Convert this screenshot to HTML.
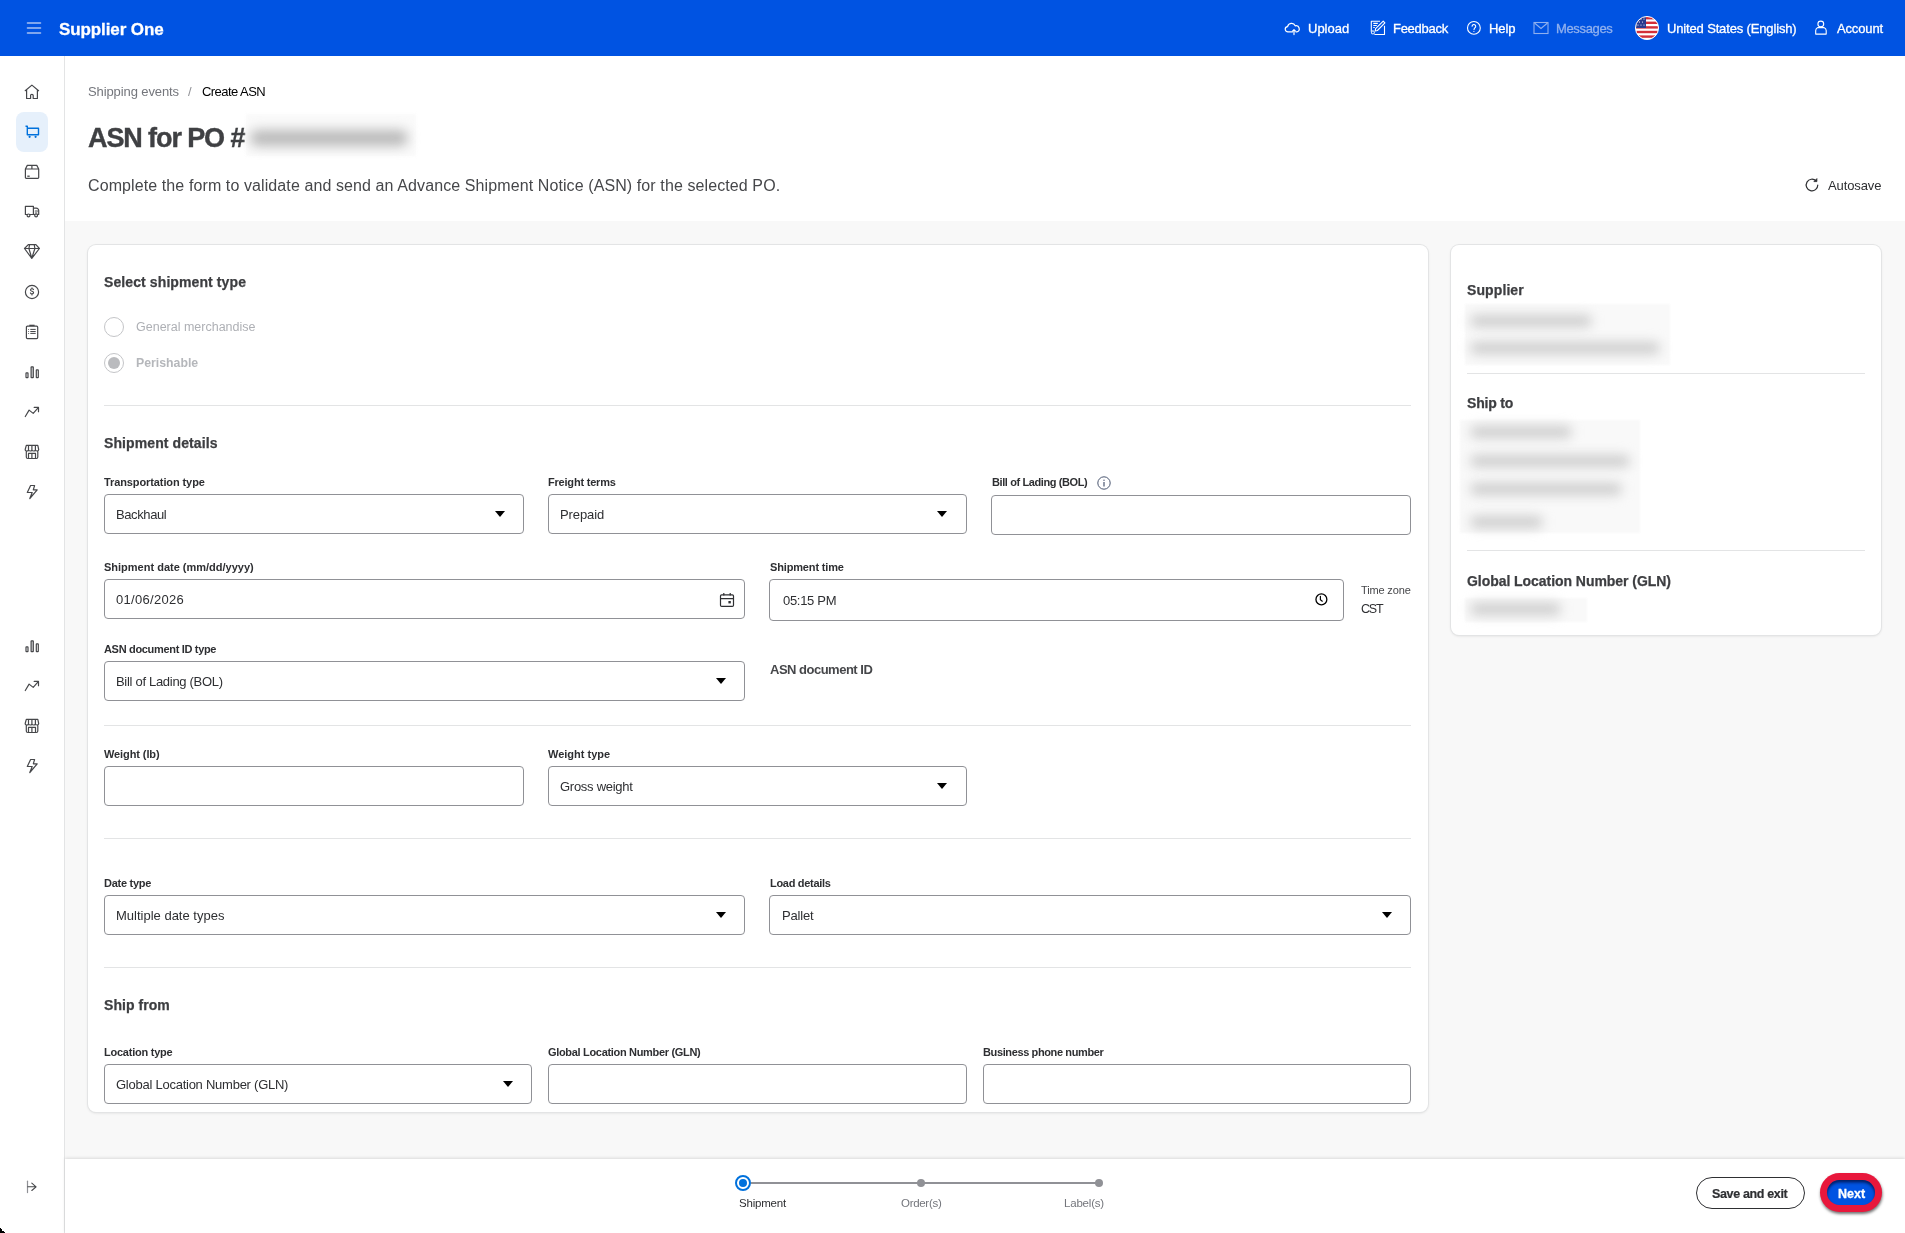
<!DOCTYPE html>
<html><head><meta charset="utf-8"><title>Create ASN</title>
<style>
html,body{margin:0;padding:0;}
body{width:1905px;height:1233px;position:relative;overflow:hidden;background:#fff;font-family:"Liberation Sans", sans-serif;}
.t{position:absolute;white-space:nowrap;line-height:1;will-change:transform;}
svg{overflow:visible}
</style></head><body>
<div style="position:absolute;left:0px;top:0px;width:1905px;height:56px;background:#0053e2"></div>
<div style="position:absolute;left:0px;top:56px;width:64px;height:1177px;background:#fff"></div>
<div style="position:absolute;left:64px;top:56px;width:1px;height:1177px;background:#e3e4e5"></div>
<div style="position:absolute;left:65px;top:56px;width:1840px;height:165px;background:#fff"></div>
<div style="position:absolute;left:65px;top:221px;width:1840px;height:938px;background:#f8f8f8"></div>
<div style="position:absolute;left:65px;top:1159px;width:1840px;height:74px;background:#fff;box-shadow:0 -1px 3px rgba(0,0,0,0.12)"></div>
<svg style="position:absolute;left:26px;top:20px;" width="16" height="16" viewBox="0 0 16 16" fill="none"><path d="M1.5 3h13M1.5 8h13M1.5 13h13" stroke="#a9c2f2" stroke-width="1.6" stroke-linecap="round"/></svg>
<div class="t" style="left:59px;top:20.61px;font-size:17px;font-weight:700;color:#fff;letter-spacing:-0.1px;-webkit-text-stroke:0.3px #fff">Supplier One</div>
<svg style="position:absolute;left:1284px;top:20px;" width="16" height="16" viewBox="0 0 16 16" fill="none"><path d="M8.4 11.9H4.1a2.6 2.6 0 0 1-.5-5.2 4 4 0 0 1 7.6-.9 2.8 2.8 0 0 1 1.7 6.1h-.8" stroke="#fff" stroke-width="1.2" stroke-linecap="round" stroke-linejoin="round"/><path d="M10 14.6V9.7M8.5 11.1 10 9.6l1.5 1.5" stroke="#fff" stroke-width="1.2" stroke-linecap="round" stroke-linejoin="round"/></svg>
<div class="t" style="left:1308px;top:21.80px;font-size:13px;font-weight:400;color:#fff;letter-spacing:0px;-webkit-text-stroke:0.3px #fff">Upload</div>
<svg style="position:absolute;left:1370px;top:20px;" width="16" height="16" viewBox="0 0 16 16" fill="none"><path d="M10 1.3H1.3v10.4 M4.4 14.5h10.1V5.8" stroke="#fff" stroke-width="1.1" stroke-linejoin="round"/><path d="M3.3 3.4h4.5M3.3 5.5h3.5M3.3 7.5h1.5" stroke="#fff" stroke-width="1.1"/><path d="M13.2 1.2l1.7 1.7-7.5 7.6-2.2.4.4-2.2z" stroke="#fff" stroke-width="1.1" stroke-linejoin="round"/><circle cx="2.9" cy="12.4" r="1.5" stroke="#cfe0fb" stroke-width="1.1"/></svg>
<div class="t" style="left:1393px;top:21.80px;font-size:13px;font-weight:400;color:#fff;letter-spacing:-0.28px;-webkit-text-stroke:0.3px #fff">Feedback</div>
<svg style="position:absolute;left:1466px;top:20px;" width="16" height="16" viewBox="0 0 16 16" fill="none"><circle cx="7.9" cy="7.9" r="6.4" stroke="#fff" stroke-width="1.1"/><path d="M6.1 6.2a1.8 1.8 0 1 1 2.9 1.5c-.6.5-.9.9-1 1.9" stroke="#fff" stroke-width="1.1" stroke-linecap="round"/><circle cx="7.9" cy="11.5" r=".6" fill="#fff"/></svg>
<div class="t" style="left:1488.5px;top:21.80px;font-size:13px;font-weight:400;color:#fff;letter-spacing:-0.1px;-webkit-text-stroke:0.3px #fff">Help</div>
<svg style="position:absolute;left:1533px;top:21px;" width="16" height="14" viewBox="0 0 16 14" fill="none"><rect x="1" y="1.5" width="14" height="11" stroke="#8fb0ee" stroke-width="1.1"/><path d="M1.5 2l6.5 5.5L14.5 2" stroke="#8fb0ee" stroke-width="1.1"/></svg>
<div class="t" style="left:1555.5px;top:21.80px;font-size:13px;font-weight:400;color:#8fb0ee;letter-spacing:-0.35px;-webkit-text-stroke:0.3px #8fb0ee">Messages</div>
<svg style="position:absolute;left:1635px;top:16px" width="24" height="24" viewBox="0 0 24 24">
<defs><clipPath id="fc"><circle cx="12" cy="12" r="11.5"/></clipPath></defs>
<g clip-path="url(#fc)">
<rect width="24" height="24" fill="#fff"/>
<rect y="1" width="24" height="2.4" fill="#d22f3a"/><rect y="5.6" width="24" height="2.4" fill="#d22f3a"/><rect y="10.2" width="24" height="2.4" fill="#d22f3a"/><rect y="14.8" width="24" height="2.4" fill="#d22f3a"/><rect y="19.4" width="24" height="2.4" fill="#d22f3a"/>
<rect width="11" height="12" fill="#2a3b8f"/>
<circle cx="3" cy="3" r=".6" fill="#fff"/><circle cx="6" cy="3" r=".6" fill="#fff"/><circle cx="9" cy="3" r=".6" fill="#fff"/><circle cx="4.5" cy="6" r=".6" fill="#fff"/><circle cx="7.5" cy="6" r=".6" fill="#fff"/><circle cx="3" cy="9" r=".6" fill="#fff"/><circle cx="6" cy="9" r=".6" fill="#fff"/><circle cx="9" cy="9" r=".6" fill="#fff"/>
</g><circle cx="12" cy="12" r="11.5" fill="none" stroke="#fff" stroke-width="1"/></svg>
<div class="t" style="left:1666.5px;top:21.80px;font-size:13px;font-weight:400;color:#fff;letter-spacing:-0.15px;-webkit-text-stroke:0.3px #fff">United States (English)</div>
<svg style="position:absolute;left:1813px;top:20px;" width="16" height="16" viewBox="0 0 16 16" fill="none"><circle cx="7.8" cy="4" r="2.9" stroke="#fff" stroke-width="1.1"/><path d="M2.7 14.1v-3.5q0-2.1 2.1-3h6.1q2.3.9 2.3 3v3.5z" stroke="#fff" stroke-width="1.1" stroke-linejoin="round"/></svg>
<div class="t" style="left:1836.5px;top:21.80px;font-size:13px;font-weight:400;color:#fff;letter-spacing:-0.15px;-webkit-text-stroke:0.3px #fff">Account</div>
<div style="position:absolute;left:16px;top:112px;width:32px;height:40px;background:#e6f0fb;border-radius:8px"></div>
<svg style="position:absolute;left:24px;top:84px;" width="16" height="16" viewBox="0 0 16 16" fill="none"><path d="M1.2 6.7 7.9 1.1l6.7 5.6 M2.6 5.6v8.9h4v-2.9a1.3 1.3 0 0 1 2.6 0v2.9h4.2V5.6" stroke="#46474a" stroke-width="1.2" stroke-linejoin="round" stroke-linecap="round"/></svg>
<svg style="position:absolute;left:24px;top:124px;" width="16" height="16" viewBox="0 0 16 16" fill="none"><path d="M1.5 2.2h1.8v8.6h11.2V4.3H3.3" stroke="#0071dc" stroke-width="1.4" stroke-linejoin="round"/><circle cx="5.6" cy="12.8" r="1.1" fill="#0071dc"/><circle cx="11.6" cy="12.8" r="1.1" fill="#0071dc"/></svg>
<svg style="position:absolute;left:24px;top:164px;" width="16" height="16" viewBox="0 0 16 16" fill="none"><path d="M3.3 1.4h9.5l1.9 3.6v8.6a.8.8 0 0 1-.8.8H2.2a.8.8 0 0 1-.8-.8V5z M1.4 5h13.3 M7.9 1.4V5" stroke="#46474a" stroke-width="1.2" stroke-linejoin="round" stroke-linecap="round"/><path d="M3.3 12.2h2.4" stroke="#46474a" stroke-width="1.3"/></svg>
<svg style="position:absolute;left:24px;top:204px;" width="16" height="16" viewBox="0 0 16 16" fill="none"><path d="M1.4 2.3h8v8.2h-8z M9.4 4.2h2.9a2.4 2.4 0 0 1 2.4 2.4v3.9H9.4 M11.3 7h2.2 M11.3 9h1.6" stroke="#46474a" stroke-width="1.2" stroke-linejoin="round" stroke-linecap="round"/><circle cx="4.5" cy="11.4" r="1.4" fill="#fff" stroke="#46474a" stroke-width="1.2" stroke-linejoin="round" stroke-linecap="round"/><circle cx="12.1" cy="11.4" r="1.4" fill="#fff" stroke="#46474a" stroke-width="1.2" stroke-linejoin="round" stroke-linecap="round"/></svg>
<svg style="position:absolute;left:24px;top:244px;" width="16" height="16" viewBox="0 0 16 16" fill="none"><path d="M4.3 0.6h7.6l3.5 3.9L7.8 14.4.5 4.5z M.5 4.5h14.9 M5.6 .6 4.9 4.5l2.9 9.6 M10.2 .6l.7 3.9-3.1 9.6" stroke="#46474a" stroke-width="1.2" stroke-linejoin="round" stroke-linecap="round"/></svg>
<svg style="position:absolute;left:24px;top:284px;" width="16" height="16" viewBox="0 0 16 16" fill="none"><circle cx="8" cy="8" r="6.6" stroke="#46474a" stroke-width="1.2" stroke-linejoin="round" stroke-linecap="round"/><path d="M9.5 5.6c-.2-.6-.8-.9-1.5-.9-.9 0-1.5.5-1.5 1.2 0 1.6 3.1 1 3.1 2.7 0 .8-.7 1.3-1.6 1.3-.7 0-1.3-.4-1.6-1M8 3.9v.8M8 10v.9" stroke="#46474a" stroke-width="1.1" stroke-linecap="round"/></svg>
<svg style="position:absolute;left:24px;top:324px;" width="16" height="16" viewBox="0 0 16 16" fill="none"><rect x="2.4" y="2.2" width="11.3" height="12.4" rx="1" stroke="#46474a" stroke-width="1.2" stroke-linejoin="round" stroke-linecap="round"/><path d="M5.3 1.4h5.3" stroke="#46474a" stroke-width="1.4"/><path d="M6.3 5.4h5.4M6.3 7.5h5.4M6.3 9.4h5.4" stroke="#46474a" stroke-width="1"/><circle cx="4.6" cy="5.4" r=".5" fill="#46474a"/><circle cx="4.6" cy="7.5" r=".5" fill="#46474a"/><circle cx="4.6" cy="9.4" r=".5" fill="#46474a"/></svg>
<svg style="position:absolute;left:24px;top:364px;" width="16" height="16" viewBox="0 0 16 16" fill="none"><rect x="2" y="8.9" width="2" height="4.8" rx=".4" stroke="#46474a" stroke-width="1.2" stroke-linejoin="round" stroke-linecap="round"/><rect x="7.1" y="2.8" width="2.2" height="10.9" rx=".4" fill="#d8d9dc" stroke="#46474a" stroke-width="1.2" stroke-linejoin="round" stroke-linecap="round"/><rect x="12.3" y="5.9" width="2" height="7.8" rx=".4" stroke="#46474a" stroke-width="1.2" stroke-linejoin="round" stroke-linecap="round"/></svg>
<svg style="position:absolute;left:24px;top:404px;" width="16" height="16" viewBox="0 0 16 16" fill="none"><path d="M1.3 12.5 5.1 6.1l4.1 3.3 5.3-6 M10.2 3.4h4.3v4.3" stroke="#46474a" stroke-width="1.2" stroke-linejoin="round" stroke-linecap="round"/></svg>
<svg style="position:absolute;left:24px;top:444px;" width="16" height="16" viewBox="0 0 16 16" fill="none"><path d="M2.3 1.3h11.5l.9 4.2q0 1.5-1.7 1.5-1.6 0-1.6-1.2 0 1.2-1.8 1.2-1.7 0-1.7-1.2 0 1.2-1.7 1.2-1.7 0-1.7-1.2 0 1.2-1.6 1.2Q1.2 7 1.2 5.5z M4.5 1.3v4.5 M7.9 1.3v4.5 M11.4 1.3v4.5 M2.3 7v6q0 1.5 1.5 1.5h8.5q1.5 0 1.5-1.5V7 M4.5 14.5V9.4h7v5.1 M7.9 9.4v5.1" stroke="#46474a" stroke-width="1.2" stroke-linejoin="round" stroke-linecap="round"/></svg>
<svg style="position:absolute;left:24px;top:484px;" width="16" height="16" viewBox="0 0 16 16" fill="none"><path d="M6.6 1.5h4L9.3 5.8h3.9L5.8 14.5l2.4-6H3.3z" stroke="#46474a" stroke-width="1.2" stroke-linejoin="round" stroke-linecap="round"/></svg>
<svg style="position:absolute;left:24px;top:638px;" width="16" height="16" viewBox="0 0 16 16" fill="none"><rect x="2" y="8.9" width="2" height="4.8" rx=".4" stroke="#46474a" stroke-width="1.2" stroke-linejoin="round" stroke-linecap="round"/><rect x="7.1" y="2.8" width="2.2" height="10.9" rx=".4" fill="#d8d9dc" stroke="#46474a" stroke-width="1.2" stroke-linejoin="round" stroke-linecap="round"/><rect x="12.3" y="5.9" width="2" height="7.8" rx=".4" stroke="#46474a" stroke-width="1.2" stroke-linejoin="round" stroke-linecap="round"/></svg>
<svg style="position:absolute;left:24px;top:678px;" width="16" height="16" viewBox="0 0 16 16" fill="none"><path d="M1.3 12.5 5.1 6.1l4.1 3.3 5.3-6 M10.2 3.4h4.3v4.3" stroke="#46474a" stroke-width="1.2" stroke-linejoin="round" stroke-linecap="round"/></svg>
<svg style="position:absolute;left:24px;top:718px;" width="16" height="16" viewBox="0 0 16 16" fill="none"><path d="M2.3 1.3h11.5l.9 4.2q0 1.5-1.7 1.5-1.6 0-1.6-1.2 0 1.2-1.8 1.2-1.7 0-1.7-1.2 0 1.2-1.7 1.2-1.7 0-1.7-1.2 0 1.2-1.6 1.2Q1.2 7 1.2 5.5z M4.5 1.3v4.5 M7.9 1.3v4.5 M11.4 1.3v4.5 M2.3 7v6q0 1.5 1.5 1.5h8.5q1.5 0 1.5-1.5V7 M4.5 14.5V9.4h7v5.1 M7.9 9.4v5.1" stroke="#46474a" stroke-width="1.2" stroke-linejoin="round" stroke-linecap="round"/></svg>
<svg style="position:absolute;left:24px;top:758px;" width="16" height="16" viewBox="0 0 16 16" fill="none"><path d="M6.6 1.5h4L9.3 5.8h3.9L5.8 14.5l2.4-6H3.3z" stroke="#46474a" stroke-width="1.2" stroke-linejoin="round" stroke-linecap="round"/></svg>
<svg style="position:absolute;left:24px;top:1179px;" width="16" height="16" viewBox="0 0 16 16" fill="none"><path d="M3.5 2.2v11.4" stroke="#909196" stroke-width="1.2" stroke-linecap="round"/><path d="M3.8 7.8h8.2M7.8 4.1l4.3 3.7-4.3 3.7" stroke="#46474a" stroke-width="1.1" stroke-linecap="round" stroke-linejoin="round"/></svg>
<div class="t" style="left:87.5px;top:85.40px;font-size:13px;font-weight:400;color:#74767c;letter-spacing:-0.1px;">Shipping events</div>
<div class="t" style="left:188px;top:85.40px;font-size:13px;font-weight:400;color:#909196;letter-spacing:0px;">/</div>
<div class="t" style="left:202px;top:85.40px;font-size:13px;font-weight:400;color:#000;letter-spacing:-0.55px;">Create ASN</div>
<div class="t" style="left:88px;top:125.14px;font-size:27px;font-weight:700;color:#3f4043;letter-spacing:-1.1px;-webkit-text-stroke:0.4px #3f4043">ASN for PO #</div>
<div style="position:absolute;left:246px;top:114px;width:170px;height:42px;background:#fafafa;filter:blur(1.5px)"></div>
<div style="position:absolute;left:250px;top:130px;width:158px;height:16px;background:#bababa;border-radius:8px;filter:blur(6px)"></div>
<div class="t" style="left:87.6px;top:177.86px;font-size:16px;font-weight:400;color:#46474a;letter-spacing:0.1px;">Complete the form to validate and send an Advance Shipment Notice (ASN) for the selected PO.</div>
<svg style="position:absolute;left:1804px;top:177px;" width="16" height="16" viewBox="0 0 16 16" fill="none"><path d="M13.8 8a5.8 5.8 0 1 1-1.7-4.1" stroke="#2e2f32" stroke-width="1.2" stroke-linecap="round"/><path d="M12.9 1.6v3h-3z" fill="#2e2f32" stroke="#2e2f32" stroke-width="0.8" stroke-linejoin="round"/></svg>
<div class="t" style="left:1828px;top:179.00px;font-size:13px;font-weight:400;color:#2e2f32;letter-spacing:-0.1px;">Autosave</div>
<div style="position:absolute;left:88px;top:245px;width:1340px;height:867px;background:#fff;border-radius:8px;box-shadow:0 0 0 1px #e3e4e5, 0 1px 3px rgba(0,0,0,0.12)"></div>
<div class="t" style="left:104px;top:274.95px;font-size:14px;font-weight:700;color:#3d3e41;letter-spacing:0.1px;-webkit-text-stroke:0.25px #3d3e41">Select shipment type</div>
<div style="position:absolute;left:104px;top:317px;width:20px;height:20px;box-sizing:border-box;border:1px solid #c4c5c8;border-radius:50%;background:#fff"></div>
<div class="t" style="left:136px;top:321.22px;font-size:12.5px;font-weight:400;color:#aeb0b5;letter-spacing:0px;">General merchandise</div>
<div style="position:absolute;left:104px;top:353px;width:20px;height:20px;box-sizing:border-box;border:1px solid #c4c5c8;border-radius:50%;background:#fff"></div>
<div style="position:absolute;left:108px;top:357px;width:12px;height:12px;border-radius:50%;background:#babbbe"></div>
<div class="t" style="left:136px;top:357.39px;font-size:12.3px;font-weight:700;color:#b5b7bb;letter-spacing:0px;">Perishable</div>
<div style="position:absolute;left:104px;top:405px;width:1307px;height:1px;background:#e3e4e5"></div>
<div class="t" style="left:104px;top:436.15px;font-size:14px;font-weight:700;color:#3d3e41;letter-spacing:0.1px;-webkit-text-stroke:0.25px #3d3e41">Shipment details</div>
<div class="t" style="left:104px;top:476.69px;font-size:11px;font-weight:700;color:#2e2f32;letter-spacing:-0.1px;">Transportation type</div>
<div style="position:absolute;left:104px;top:494px;width:420px;height:40px;box-sizing:border-box;border:1px solid #909196;border-radius:4px;background:#fff"></div>
<div class="t" style="left:116px;top:507.70px;font-size:13px;font-weight:400;color:#2e2f32;letter-spacing:-0.4px;">Backhaul</div>
<svg style="position:absolute;left:495px;top:511px;" width="10" height="6" viewBox="0 0 10 6" fill="none"><path d="M0 0h10L5 6z" fill="#000"/></svg>
<div class="t" style="left:548px;top:476.69px;font-size:11px;font-weight:700;color:#2e2f32;letter-spacing:-0.2px;">Freight terms</div>
<div style="position:absolute;left:548px;top:494px;width:419px;height:40px;box-sizing:border-box;border:1px solid #909196;border-radius:4px;background:#fff"></div>
<div class="t" style="left:559.5px;top:507.70px;font-size:13px;font-weight:400;color:#2e2f32;letter-spacing:-0.1px;">Prepaid</div>
<svg style="position:absolute;left:937px;top:511px;" width="10" height="6" viewBox="0 0 10 6" fill="none"><path d="M0 0h10L5 6z" fill="#000"/></svg>
<div class="t" style="left:991.5px;top:476.69px;font-size:11px;font-weight:700;color:#2e2f32;letter-spacing:-0.4px;">Bill of Lading (BOL)</div>
<svg style="position:absolute;left:1097px;top:476px;" width="14" height="14" viewBox="0 0 14 14" fill="none"><circle cx="7" cy="7" r="6.2" stroke="#4a5670" stroke-width="1"/><path d="M7 6v4.4" stroke="#4a5670" stroke-width="1.2"/><circle cx="7" cy="4.2" r=".7" fill="#4a5670"/></svg>
<div style="position:absolute;left:991px;top:495px;width:420px;height:40px;box-sizing:border-box;border:1px solid #909196;border-radius:4px;background:#fff"></div>
<div class="t" style="left:104px;top:561.69px;font-size:11px;font-weight:700;color:#2e2f32;letter-spacing:0px;">Shipment date (mm/dd/yyyy)</div>
<div style="position:absolute;left:104px;top:579px;width:641px;height:40px;box-sizing:border-box;border:1px solid #909196;border-radius:4px;background:#fff"></div>
<div class="t" style="left:116px;top:592.70px;font-size:13px;font-weight:400;color:#2e2f32;letter-spacing:0.3px;">01/06/2026</div>
<svg style="position:absolute;left:719px;top:592px;" width="16" height="16" viewBox="0 0 16 16" fill="none"><rect x="1.5" y="2.8" width="13" height="11.6" rx="1.2" stroke="#2e2f32" stroke-width="1.2"/><path d="M1.5 6.6h13 M4.8 1v2.6 M11.2 1v2.6" stroke="#2e2f32" stroke-width="1.2"/><rect x="9.4" y="9" width="2.4" height="2.4" fill="#2e2f32"/></svg>
<div class="t" style="left:769.5px;top:561.69px;font-size:11px;font-weight:700;color:#2e2f32;letter-spacing:-0.15px;">Shipment time</div>
<div style="position:absolute;left:769px;top:579px;width:575px;height:42px;box-sizing:border-box;border:1px solid #909196;border-radius:4px;background:#fff"></div>
<div class="t" style="left:782.5px;top:593.70px;font-size:13px;font-weight:400;color:#2e2f32;letter-spacing:-0.3px;">05:15 PM</div>
<svg style="position:absolute;left:1313px;top:591px;" width="16" height="16" viewBox="0 0 16 16" fill="none"><circle cx="8.4" cy="8.4" r="5.45" stroke="#000" stroke-width="1.3"/><path d="M7.4 5.3v3.4l1.9 1.5" stroke="#000" stroke-width="1.2" stroke-linecap="round"/></svg>
<div class="t" style="left:1360.5px;top:584.59px;font-size:11px;font-weight:400;color:#46474a;letter-spacing:-0.15px;">Time zone</div>
<div class="t" style="left:1360.5px;top:602.92px;font-size:12.5px;font-weight:400;color:#2e2f32;letter-spacing:-1.2px;">CST</div>
<div class="t" style="left:104px;top:643.69px;font-size:11px;font-weight:700;color:#2e2f32;letter-spacing:-0.32px;">ASN document ID type</div>
<div style="position:absolute;left:104px;top:661px;width:641px;height:40px;box-sizing:border-box;border:1px solid #909196;border-radius:4px;background:#fff"></div>
<div class="t" style="left:116px;top:674.70px;font-size:13px;font-weight:400;color:#2e2f32;letter-spacing:-0.3px;">Bill of Lading (BOL)</div>
<svg style="position:absolute;left:716px;top:678px;" width="10" height="6" viewBox="0 0 10 6" fill="none"><path d="M0 0h10L5 6z" fill="#000"/></svg>
<div class="t" style="left:769.5px;top:663.00px;font-size:13px;font-weight:700;color:#46474a;letter-spacing:-0.5px;">ASN document ID</div>
<div style="position:absolute;left:104px;top:725px;width:1307px;height:1px;background:#e3e4e5"></div>
<div class="t" style="left:104px;top:748.69px;font-size:11px;font-weight:700;color:#2e2f32;letter-spacing:-0.1px;">Weight (lb)</div>
<div style="position:absolute;left:104px;top:766px;width:420px;height:40px;box-sizing:border-box;border:1px solid #909196;border-radius:4px;background:#fff"></div>
<div class="t" style="left:548px;top:748.69px;font-size:11px;font-weight:700;color:#2e2f32;letter-spacing:0px;">Weight type</div>
<div style="position:absolute;left:548px;top:766px;width:419px;height:40px;box-sizing:border-box;border:1px solid #909196;border-radius:4px;background:#fff"></div>
<div class="t" style="left:559.5px;top:779.70px;font-size:13px;font-weight:400;color:#2e2f32;letter-spacing:-0.27px;">Gross weight</div>
<svg style="position:absolute;left:937px;top:783px;" width="10" height="6" viewBox="0 0 10 6" fill="none"><path d="M0 0h10L5 6z" fill="#000"/></svg>
<div style="position:absolute;left:104px;top:838px;width:1307px;height:1px;background:#e3e4e5"></div>
<div class="t" style="left:104px;top:878.19px;font-size:11px;font-weight:700;color:#2e2f32;letter-spacing:-0.26px;">Date type</div>
<div style="position:absolute;left:104px;top:895px;width:641px;height:40px;box-sizing:border-box;border:1px solid #909196;border-radius:4px;background:#fff"></div>
<div class="t" style="left:116px;top:908.70px;font-size:13px;font-weight:400;color:#2e2f32;letter-spacing:0px;">Multiple date types</div>
<svg style="position:absolute;left:716px;top:912px;" width="10" height="6" viewBox="0 0 10 6" fill="none"><path d="M0 0h10L5 6z" fill="#000"/></svg>
<div class="t" style="left:769.5px;top:878.19px;font-size:11px;font-weight:700;color:#2e2f32;letter-spacing:-0.3px;">Load details</div>
<div style="position:absolute;left:769px;top:895px;width:642px;height:40px;box-sizing:border-box;border:1px solid #909196;border-radius:4px;background:#fff"></div>
<div class="t" style="left:781.5px;top:908.70px;font-size:13px;font-weight:400;color:#2e2f32;letter-spacing:-0.2px;">Pallet</div>
<svg style="position:absolute;left:1382px;top:912px;" width="10" height="6" viewBox="0 0 10 6" fill="none"><path d="M0 0h10L5 6z" fill="#000"/></svg>
<div style="position:absolute;left:104px;top:967px;width:1307px;height:1px;background:#e3e4e5"></div>
<div class="t" style="left:104px;top:998.15px;font-size:14px;font-weight:700;color:#3d3e41;letter-spacing:0.05px;-webkit-text-stroke:0.25px #3d3e41">Ship from</div>
<div class="t" style="left:104px;top:1047.19px;font-size:11px;font-weight:700;color:#2e2f32;letter-spacing:-0.24px;">Location type</div>
<div style="position:absolute;left:104px;top:1064px;width:428px;height:40px;box-sizing:border-box;border:1px solid #909196;border-radius:4px;background:#fff"></div>
<div class="t" style="left:116px;top:1077.70px;font-size:13px;font-weight:400;color:#2e2f32;letter-spacing:-0.25px;">Global Location Number (GLN)</div>
<svg style="position:absolute;left:503px;top:1081px;" width="10" height="6" viewBox="0 0 10 6" fill="none"><path d="M0 0h10L5 6z" fill="#000"/></svg>
<div class="t" style="left:548px;top:1047.19px;font-size:11px;font-weight:700;color:#2e2f32;letter-spacing:-0.32px;">Global Location Number (GLN)</div>
<div style="position:absolute;left:548px;top:1064px;width:419px;height:40px;box-sizing:border-box;border:1px solid #909196;border-radius:4px;background:#fff"></div>
<div class="t" style="left:983px;top:1047.19px;font-size:11px;font-weight:700;color:#2e2f32;letter-spacing:-0.38px;">Business phone number</div>
<div style="position:absolute;left:983px;top:1064px;width:428px;height:40px;box-sizing:border-box;border:1px solid #909196;border-radius:4px;background:#fff"></div>
<div style="position:absolute;left:1451px;top:245px;width:430px;height:390px;background:#fff;border-radius:8px;box-shadow:0 0 0 1px #e3e4e5, 0 1px 3px rgba(0,0,0,0.12)"></div>
<div class="t" style="left:1467px;top:283.25px;font-size:14px;font-weight:700;color:#3d3e41;letter-spacing:0.1px;-webkit-text-stroke:0.25px #3d3e41">Supplier</div>
<div style="position:absolute;left:1465px;top:304px;width:205px;height:61px;background:#f9f9f9;filter:blur(1px)"></div>
<div style="position:absolute;left:1470px;top:314.5px;width:122px;height:12px;background:#cdcdcd;border-radius:6px;filter:blur(6px)"></div>
<div style="position:absolute;left:1470px;top:342.4px;width:190px;height:12px;background:#cdcdcd;border-radius:6px;filter:blur(6px)"></div>
<div style="position:absolute;left:1467px;top:373px;width:398px;height:1px;background:#e3e4e5"></div>
<div class="t" style="left:1467px;top:396.05px;font-size:14px;font-weight:700;color:#3d3e41;letter-spacing:-0.2px;-webkit-text-stroke:0.25px #3d3e41">Ship to</div>
<div style="position:absolute;left:1460px;top:420px;width:180px;height:113px;background:#f9f9f9;filter:blur(1px)"></div>
<div style="position:absolute;left:1470px;top:425.5px;width:102px;height:12px;background:#cdcdcd;border-radius:6px;filter:blur(6px)"></div>
<div style="position:absolute;left:1470px;top:454.7px;width:160px;height:12px;background:#cdcdcd;border-radius:6px;filter:blur(6px)"></div>
<div style="position:absolute;left:1470px;top:482.5px;width:152px;height:12px;background:#cdcdcd;border-radius:6px;filter:blur(6px)"></div>
<div style="position:absolute;left:1470px;top:516px;width:73px;height:12px;background:#cdcdcd;border-radius:6px;filter:blur(6px)"></div>
<div style="position:absolute;left:1467px;top:550px;width:398px;height:1px;background:#e3e4e5"></div>
<div class="t" style="left:1467px;top:573.65px;font-size:14px;font-weight:700;color:#3d3e41;letter-spacing:-0.05px;-webkit-text-stroke:0.25px #3d3e41">Global Location Number (GLN)</div>
<div style="position:absolute;left:1465px;top:598px;width:122px;height:24px;background:#f9f9f9;filter:blur(1px)"></div>
<div style="position:absolute;left:1470px;top:602.5px;width:91px;height:12px;background:#cdcdcd;border-radius:6px;filter:blur(6px)"></div>
<div style="position:absolute;left:751px;top:1182px;width:348px;height:2px;background:#909196"></div>
<div style="position:absolute;left:735px;top:1175px;width:16px;height:16px;box-sizing:border-box;border:2px solid #0071dc;border-radius:50%;background:#fff"></div>
<div style="position:absolute;left:739px;top:1179px;width:8px;height:8px;border-radius:50%;background:#0071dc"></div>
<div style="position:absolute;left:917px;top:1179px;width:8px;height:8px;border-radius:50%;background:#909196"></div>
<div style="position:absolute;left:1095px;top:1179px;width:8px;height:8px;border-radius:50%;background:#909196"></div>
<div class="t" style="left:739px;top:1197.67px;font-size:11.5px;font-weight:400;color:#2e2f32;letter-spacing:-0.2px;">Shipment</div>
<div class="t" style="left:901px;top:1197.67px;font-size:11.5px;font-weight:400;color:#74767c;letter-spacing:-0.3px;">Order(s)</div>
<div class="t" style="left:1063.5px;top:1197.67px;font-size:11.5px;font-weight:400;color:#74767c;letter-spacing:-0.2px;">Label(s)</div>
<div style="position:absolute;left:1696px;top:1177px;width:109px;height:32px;box-sizing:border-box;border:1px solid #2e2f32;border-radius:16px;background:#fff"></div>
<div class="t" style="left:1712px;top:1187.92px;font-size:12.5px;font-weight:700;color:#2e2f32;letter-spacing:-0.35px;-webkit-text-stroke:0.2px #2e2f32">Save and exit</div>
<div style="position:absolute;left:1820px;top:1173px;width:62px;height:39px;border-radius:19.5px;background:#e8173c;box-shadow:0.5px 2px 3px rgba(0,0,0,0.55)"></div>
<div style="position:absolute;left:1827px;top:1180px;width:48px;height:25px;border-radius:12.5px;background:#0053e2;box-shadow:inset 0 2.5px 3px rgba(0,0,30,0.65)"></div>
<div class="t" style="left:1837.5px;top:1188.22px;font-size:12.5px;font-weight:700;color:#fff;letter-spacing:0px;-webkit-text-stroke:0.3px #fff">Next</div>
<div style="position:absolute;left:0px;top:1228px;width:1px;height:1px;background:#000"></div>
<div style="position:absolute;left:0px;top:1229px;width:2px;height:2px;background:#000"></div>
<div style="position:absolute;left:0px;top:1231px;width:4px;height:1px;background:#000"></div>
<div style="position:absolute;left:0px;top:1232px;width:5px;height:1px;background:#000"></div>
</body></html>
